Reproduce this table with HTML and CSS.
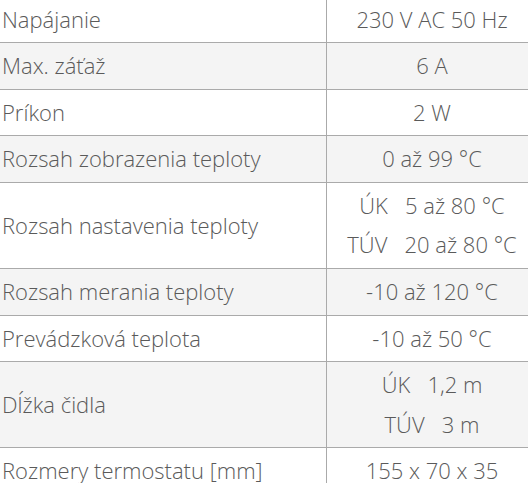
FILE: index.html
```html
<!DOCTYPE html>
<html lang="sk">
<head>
<meta charset="utf-8">
<link rel="stylesheet" href="styles.css">
</head>
<body>
<table class="spec">
  <tr><td class="k">Napájanie</td><td class="v">230 V AC 50 Hz</td></tr>
  <tr class="alt"><td class="k">Max. záťaž</td><td class="v">6 A</td></tr>
  <tr><td class="k">Príkon</td><td class="v">2 W</td></tr>
  <tr class="alt"><td class="k">Rozsah zobrazenia teploty</td><td class="v">0 až 99 °C</td></tr>
  <tr><td class="k">Rozsah nastavenia teploty</td><td class="v">ÚK&nbsp;&nbsp; 5 až 80 °C<br>TÚV&nbsp;&nbsp; 20 až 80 °C</td></tr>
  <tr class="alt"><td class="k">Rozsah merania teploty</td><td class="v">-10 až 120 °C</td></tr>
  <tr><td class="k">Prevádzková teplota</td><td class="v">-10 až 50 °C</td></tr>
  <tr class="alt"><td class="k">Dĺžka čidla</td><td class="v">ÚK&nbsp;&nbsp; 1,2 m<br>TÚV&nbsp;&nbsp; 3 m</td></tr>
  <tr><td class="k">Rozmery termostatu [mm]</td><td class="v">155 x 70 x 35</td></tr>
</table>
</body>
</html>
```

FILE: styles.css
```css
html, body {
  margin: 0;
  padding: 0;
  background: #fff;
  overflow: hidden;
}
.spec {
  border-collapse: collapse;
  width: 528px;
  margin-top: -3.67px;
  font-family: "Open Sans", "DejaVu Sans", sans-serif;
  font-weight: 300;
  font-size: 22px;
  line-height: 39.33px;
  color: #5a5a5a;
}
.spec td {
  padding: 3.17px 0;
  border-bottom: 1px solid #aaa;
  vertical-align: middle;
}
.spec .k {
  width: 324px;
  padding-left: 2px;
  text-align: left;
  border-right: 1px solid #aaa;
}
.spec .v {
  padding-left: 9px;
  text-align: center;
  white-space: nowrap;
}
.spec .alt td {
  background: #f4f4f4;
}
```
